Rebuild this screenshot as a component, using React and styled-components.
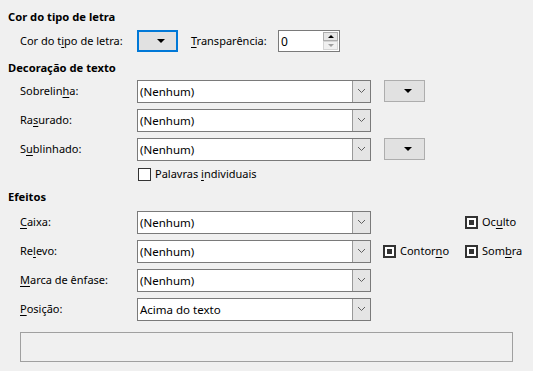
import styled, { createGlobalStyle } from 'styled-components'

// Styles globaux de la page
const GlobalStyle = createGlobalStyle`
   body {
      margin: 0;
      background: #f0f0f0;
      font-family: 'Noto Sans', 'Open Sans', sans-serif;
      font-size: 11px;
      color: #000;
   }
`

const Page = styled.div`
   width: 533px;
   height: 371px;
   padding: 9px 0 0 8px;
   box-sizing: border-box;
   display: flex;
   flex-direction: column;
`

const Heading = styled.div`
   font-weight: 700;
   font-size: 11.2px;
   height: 16px;
   line-height: 16px;
   margin-top: ${(p) => p.$top || 0}px;
`

const ColorRow = styled.div`
   display: flex;
   align-items: center;
   height: 22px;
   margin: 5px 0 0 12px;
`

const Label = styled.span`
   white-space: nowrap;
   line-height: 16px;
   flex: none;
   width: ${(p) => (p.$width ? `${p.$width}px` : 'auto')};
   margin-left: ${(p) => p.$left || 0}px;
`

const U = styled.span`
   text-decoration: underline;
   text-underline-offset: 2px;
`

const ColorButton = styled.div`
   box-sizing: border-box;
   width: 41px;
   height: 22px;
   background: #e1e1e1;
   border: ${(p) => (p.$focused ? '2px solid #0078d7' : '1px solid #adadad')};
   display: flex;
   align-items: center;
   justify-content: flex-end;
   padding-right: ${(p) => (p.$focused ? 11 : 12)}px;
`

const Triangle = styled.div`
   width: 0;
   height: 0;
   border-left: 4px solid transparent;
   border-right: 4px solid transparent;
   border-top: 4px solid #000;
`

const Spin = styled.div`
   box-sizing: border-box;
   width: 62px;
   height: 22px;
   background: #fff;
   border: 1px solid #7a7a7a;
   display: flex;
   align-items: center;
   justify-content: space-between;
   padding-left: 2px;
   font-size: 12px;
`

const SpinButtons = styled.div`
   width: 15px;
   height: 18px;
   display: flex;
   flex-direction: column;
   margin-right: 1px;
`

const SpinButton = styled.div`
   flex: 1;
   background: ${(p) => (p.$disabled ? '#f0f0f0' : '#e6e6e6')};
   border: 1px solid ${(p) => (p.$disabled ? '#d5d5d5' : '#adadad')};
   display: flex;
   align-items: center;
   justify-content: center;
   &::after {
      content: '';
      border-left: 3px solid transparent;
      border-right: 3px solid transparent;
      ${(p) => (p.$up ? 'border-bottom' : 'border-top')}: 3px solid ${(p) => (p.$disabled ? '#a0a0a0' : '#000')};
   }
`

const FormGrid = styled.div`
   display: grid;
   grid-template-columns: ${(p) => p.$columns};
   grid-auto-rows: 22px;
   row-gap: 7px;
   align-items: center;
   margin: ${(p) => p.$top}px 0 0 12px;
`

const Combo = styled.div`
   box-sizing: border-box;
   width: 234px;
   height: 23px;
   background: #fff;
   border: 1px solid #7a7a7a;
   display: flex;
   align-items: center;
   justify-content: space-between;
   padding-left: 2px;
   font-size: 11.5px;
`

const ComboButton = styled.div`
   width: 17px;
   height: 21px;
   background: #e5e5e5;
   border-left: 1px solid #9a9a9a;
   display: flex;
   align-items: center;
   justify-content: center;
`

const CheckRow = styled.div`
   display: flex;
   align-items: center;
   height: 16px;
   margin: 6px 0 0 130px;
`

const CheckItem = styled.div`
   display: flex;
   align-items: center;
   gap: 4px;
`

const Box = styled.div`
   box-sizing: border-box;
   width: 13px;
   height: 13px;
   background: #fff;
   border: ${(p) => (p.$checked ? '2px solid #333' : '1px solid #333')};
   display: flex;
   align-items: center;
   justify-content: center;
   &::after {
      content: '';
      display: ${(p) => (p.$checked ? 'block' : 'none')};
      width: 5px;
      height: 5px;
      background: #333;
   }
`

const Preview = styled.div`
   box-sizing: border-box;
   width: 493px;
   height: 30px;
   border: 1px solid #a0a0a0;
   margin: 12px 0 0 12px;
`

// Chevron du bouton de liste déroulante
function Chevron() {
   return (
      <svg width="9" height="6" viewBox="0 0 9 6">
         <path d="M1 1 L4.5 4.5 L8 1" fill="none" stroke="#606060" strokeWidth="1" />
      </svg>
   )
}

function Select({ value }) {
   return (
      <Combo>
         <span>{value}</span>
         <ComboButton>
            <Chevron />
         </ComboButton>
      </Combo>
   )
}

function Check({ checked, children }) {
   return (
      <CheckItem>
         <Box $checked={checked} />
         <Label>{children}</Label>
      </CheckItem>
   )
}

function App() {
   return (
      <Page>
         <GlobalStyle />
         <Heading>Cor do tipo de letra</Heading>
         <ColorRow>
            <Label $width={117}>
               Cor do t<U>i</U>po de letra:
            </Label>
            <ColorButton $focused>
               <Triangle />
            </ColorButton>
            <Label $width={87} $left={13}>
               <U>T</U>ransparência:
            </Label>
            <Spin>
               <span>0</span>
               <SpinButtons>
                  <SpinButton $up />
                  <SpinButton $disabled />
               </SpinButtons>
            </Spin>
         </ColorRow>

         <Heading $top={8}>Decoração de texto</Heading>
         <FormGrid $columns="117px 247px 41px" $top={4}>
            <Label>
               Sobrelin<U>h</U>a:
            </Label>
            <Select value="(Nenhum)" />
            <ColorButton>
               <Triangle />
            </ColorButton>
            <Label>
               Ra<U>s</U>urado:
            </Label>
            <Select value="(Nenhum)" />
            <span />
            <Label>
               S<U>u</U>blinhado:
            </Label>
            <Select value="(Nenhum)" />
            <ColorButton>
               <Triangle />
            </ColorButton>
         </FormGrid>
         <CheckRow>
            <Check>
               Palavras <U>i</U>ndividuais
            </Check>
         </CheckRow>

         <Heading $top={7}>Efeitos</Heading>
         <FormGrid $columns="117px 246px 82px auto" $top={6}>
            <Label>
               <U>C</U>aixa:
            </Label>
            <Select value="(Nenhum)" />
            <span />
            <Check checked>
               Oc<U>u</U>lto
            </Check>
            <Label>
               Re<U>l</U>evo:
            </Label>
            <Select value="(Nenhum)" />
            <Check checked>
               Contor<U>n</U>o
            </Check>
            <Check checked>
               Som<U>b</U>ra
            </Check>
            <Label>
               <U>M</U>arca de ênfase:
            </Label>
            <Select value="(Nenhum)" />
            <span />
            <span />
            <Label>
               <U>P</U>osição:
            </Label>
            <Select value="Acima do texto" />
         </FormGrid>
         <Preview />
      </Page>
   )
}

export default App
